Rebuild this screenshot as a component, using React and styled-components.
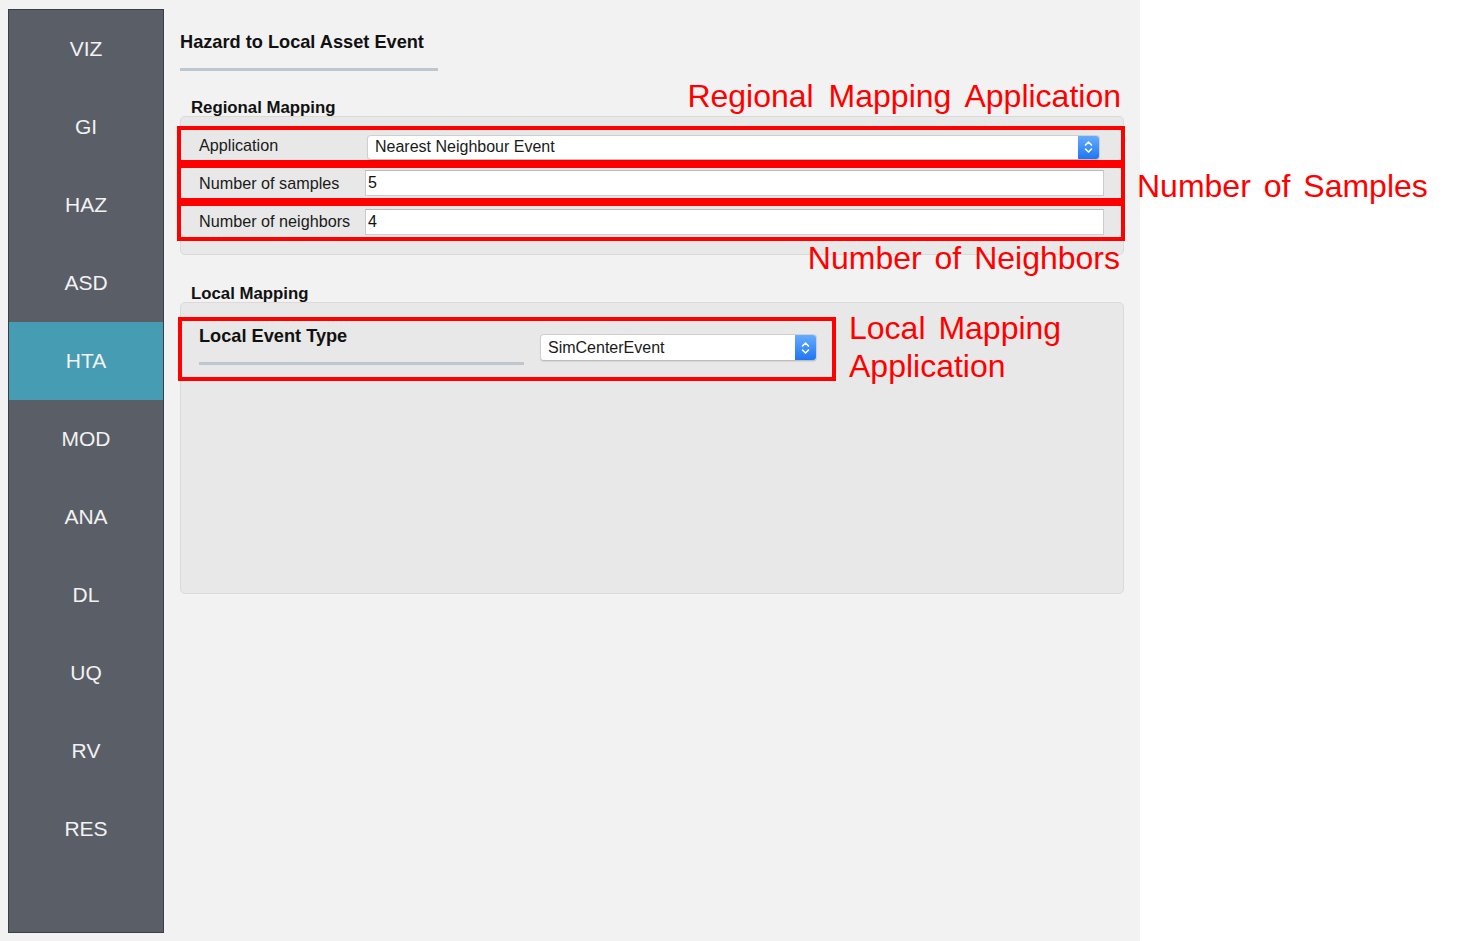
import React from "react";
import styled, { createGlobalStyle } from "styled-components";

const GlobalStyle = createGlobalStyle`
  html, body { margin: 0; padding: 0; background: #ffffff; }
  body { font-family: "Liberation Sans", Arial, sans-serif; color: #1a1a1a; }
  * { box-sizing: border-box; }
`;

const Frame = styled.div`
  position: relative;
  width: 1140px;
  height: 941px;
  background: #f2f2f2;
  display: flex;
  align-items: flex-start;
  padding: 9px 0 0 8px;
`;

const Sidebar = styled.nav`
  width: 156px;
  height: 924px;
  background: #5a5e66;
  border: 1px solid #3b3e44;
  display: flex;
  flex-direction: column;
`;

const NavItem = styled.div`
  height: 78px;
  flex: none;
  display: flex;
  align-items: center;
  justify-content: center;
  font-size: 21px;
  color: #f2f2f2;
  background: ${(p) => (p.$active ? "#469db3" : "transparent")};
`;

const Main = styled.main`
  flex: 1;
  display: flex;
  flex-direction: column;
  align-items: flex-start;
  padding: 22px 0 0 16px;
`;

const Title = styled.h1`
  margin: 0;
  font-size: 18.2px;
  line-height: 22px;
  font-weight: bold;
  color: #111;
`;

const TitleBar = styled.div`
  width: ${(p) => p.$w}px;
  height: 3px;
  background: #bcc7cf;
  margin-top: ${(p) => p.$mt}px;
`;

const GroupHeading = styled.h2`
  margin: ${(p) => p.$mt}px 0 0 11px;
  font-size: 16.8px;
  line-height: 16px;
  font-weight: bold;
  color: #111;
  position: relative;
  z-index: 1;
`;

const GroupBox = styled.section`
  width: 944px;
  height: ${(p) => p.$h}px;
  background: #e8e8e8;
  border: 1px solid #dadada;
  border-radius: 5px;
  padding: ${(p) => p.$pad};
  display: flex;
  flex-direction: column;
  align-items: flex-start;
`;

const Highlight = styled.div`
  border: 4px solid #ff0000;
  height: ${(p) => p.$h}px;
  width: ${(p) => p.$w}px;
  margin-left: ${(p) => p.$ml}px;
  margin-top: ${(p) => p.$mt || 0}px;
`;

const FieldRow = styled.div`
  height: 100%;
  display: grid;
  grid-template-columns: 166px 1fr;
  align-items: center;
  padding: 0 ${(p) => p.$pr}px 0 18px;
`;

const Label = styled.span`
  font-size: 16.2px;
  color: #1a1a1a;
  white-space: nowrap;
`;

const Combo = styled.div`
  height: ${(p) => p.$h}px;
  width: ${(p) => (p.$w ? p.$w + "px" : "auto")};
  margin-left: ${(p) => p.$ml || 0}px;
  margin-top: ${(p) => p.$mt || 0}px;
  background: #ffffff;
  border: 1px solid #cfcfcf;
  border-bottom-color: #bdbdbd;
  border-radius: 4px;
  box-shadow: 0 1px 1px rgba(0, 0, 0, 0.08);
  display: flex;
  align-items: center;
  overflow: hidden;
`;

const ComboText = styled.span`
  flex: 1;
  font-size: 16px;
  padding-left: 7px;
  color: #1a1a1a;
  white-space: nowrap;
`;

const Stepper = styled.span`
  width: 21px;
  height: 100%;
  background: linear-gradient(#65acff, #1f76f2);
  display: flex;
  align-items: center;
  justify-content: center;
`;

const TextInput = styled.div`
  height: 26px;
  background: #ffffff;
  border: 1px solid #cbcbcb;
  border-top-color: #b9b9b9;
  font-size: 16px;
  display: flex;
  align-items: center;
  padding-left: 2px;
  color: #111;
`;

const LocalRow = styled.div`
  display: flex;
  align-items: flex-start;
  height: 100%;
  padding: 4px 0 0 17px;
`;

const LocalLabelCol = styled.div`
  width: 325px;
  display: flex;
  flex-direction: column;
`;

const LocalTitle = styled.span`
  font-size: 18.2px;
  line-height: 22px;
  font-weight: bold;
  color: #111;
`;

const Annotation = styled.div`
  position: absolute;
  left: ${(p) => (p.$left != null ? p.$left + "px" : "auto")};
  right: ${(p) => (p.$right != null ? p.$right + "px" : "auto")};
  top: ${(p) => p.$top}px;
  color: #ff0000;
  font-family: "Liberation Sans", Arial, sans-serif;
  font-size: 32px;
  line-height: ${(p) => p.$lh || 32}px;
  word-spacing: ${(p) => p.$ws || 4}px;
  white-space: nowrap;
`;

const Chevrons = () => (
  <svg width="11" height="16" viewBox="0 0 11 16" fill="none" stroke="#fff" strokeWidth="1.6" strokeLinecap="round" strokeLinejoin="round">
    <path d="M2.5 6 L5.5 3 L8.5 6" />
    <path d="M2.5 10 L5.5 13 L8.5 10" />
  </svg>
);

const NAV = ["VIZ", "GI", "HAZ", "ASD", "HTA", "MOD", "ANA", "DL", "UQ", "RV", "RES"];

export default function App() {
  return (
    <>
      <GlobalStyle />
      <Frame>
        <Sidebar>
          {NAV.map((n) => (
            <NavItem key={n} $active={n === "HTA"}>
              {n}
            </NavItem>
          ))}
        </Sidebar>
        <Main>
          <Title>Hazard to Local Asset Event</Title>
          <TitleBar $w={258} $mt={15} />
          <GroupHeading $mt={29}>Regional Mapping</GroupHeading>
          <GroupBox $h={139} $pad="9px 0 0 0">
            <Highlight $h={38} $w={948} $ml={-4}>
              <FieldRow $pr={21}>
                <Label>Application</Label>
                <Combo $h={25} $ml={2} $mt={4}>
                  <ComboText>Nearest Neighbour Event</ComboText>
                  <Stepper>
                    <Chevrons />
                  </Stepper>
                </Combo>
              </FieldRow>
            </Highlight>
            <Highlight $h={38} $w={948} $ml={-4}>
              <FieldRow $pr={17}>
                <Label>Number of samples</Label>
                <TextInput>5</TextInput>
              </FieldRow>
            </Highlight>
            <Highlight $h={39} $w={948} $ml={-4}>
              <FieldRow $pr={17}>
                <Label>Number of neighbors</Label>
                <TextInput>4</TextInput>
              </FieldRow>
            </Highlight>
          </GroupBox>
          <GroupHeading $mt={31}>Local Mapping</GroupHeading>
          <GroupBox $h={292} $pad="0">
            <Highlight $h={64} $w={658} $ml={-3} $mt={14}>
              <LocalRow>
                <LocalLabelCol>
                  <LocalTitle>Local Event Type</LocalTitle>
                  <TitleBar $w={325} $mt={15} />
                </LocalLabelCol>
                <Combo $h={27} $w={277} $ml={16} $mt={9}>
                  <ComboText>SimCenterEvent</ComboText>
                  <Stepper>
                    <Chevrons />
                  </Stepper>
                </Combo>
              </LocalRow>
            </Highlight>
          </GroupBox>
        </Main>
        <Annotation $right={19} $top={80} $ws={6}>Regional Mapping Application</Annotation>
        <Annotation $left={1137} $top={170}>Number of Samples</Annotation>
        <Annotation $right={20} $top={242}>Number of Neighbors</Annotation>
        <Annotation $left={849} $top={309} $lh={38}>
          Local Mapping
          <br />
          Application
        </Annotation>
      </Frame>
    </>
  );
}
